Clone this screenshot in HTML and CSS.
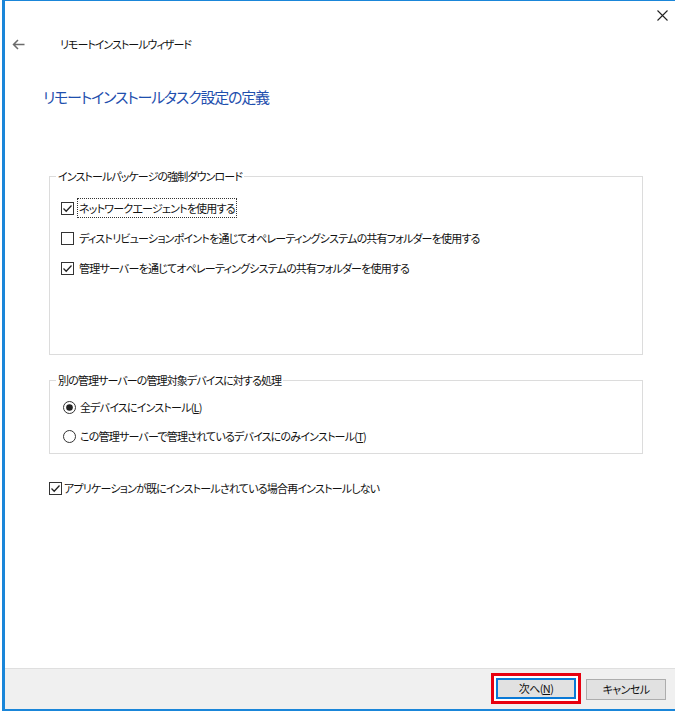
FILE: index.html
```html
<!DOCTYPE html>
<html lang="ja">
<head>
<meta charset="utf-8">
<title>リモートインストールウィザード</title>
<link rel="stylesheet" href="styles.css">
</head>
<body>
<div class="window">
  <div class="caption">
    <button class="close" aria-label="閉じる">
      <svg width="11" height="11" viewBox="0 0 11 11"><path d="M0.5 0.5 L10.5 10.5 M10.5 0.5 L0.5 10.5" stroke="#222" stroke-width="1.1" fill="none"/></svg>
    </button>
  </div>
  <div class="nav">
    <svg class="back" width="13" height="11" viewBox="0 0 13 11"><path d="M12.5 5.5 H1.5 M6 1 L1.5 5.5 L6 10" stroke="#6b6b6b" stroke-width="1.5" fill="none"/></svg>
    <span class="nav-title">リモートインストールウィザード</span>
  </div>
  <h1 class="heading">リモートインストールタスク設定の定義</h1>
  <main class="content">
    <fieldset class="group group-download">
      <legend class="group-title">インストールパッケージの強制ダウンロード</legend>
      <div class="options options-download">
        <label class="option">
          <span class="check"><svg width="13" height="13" viewBox="0 0 13 13"><rect x="0.5" y="0.5" width="12" height="12" fill="#fff" stroke="#333"/><path d="M2.5 6.5 L5.2 9.2 L10.5 3.5" stroke="#222" stroke-width="1.3" fill="none"/></svg></span>
          <span class="label focus">ネットワークエージェントを使用する</span>
        </label>
        <label class="option">
          <span class="check"><svg width="13" height="13" viewBox="0 0 13 13"><rect x="0.5" y="0.5" width="12" height="12" fill="#fff" stroke="#333"/></svg></span>
          <span class="label">ディストリビューションポイントを通じてオペレーティングシステムの共有フォルダーを使用する</span>
        </label>
        <label class="option">
          <span class="check"><svg width="13" height="13" viewBox="0 0 13 13"><rect x="0.5" y="0.5" width="12" height="12" fill="#fff" stroke="#333"/><path d="M2.5 6.5 L5.2 9.2 L10.5 3.5" stroke="#222" stroke-width="1.3" fill="none"/></svg></span>
          <span class="label">管理サーバーを通じてオペレーティングシステムの共有フォルダーを使用する</span>
        </label>
      </div>
    </fieldset>

    <fieldset class="group group-other">
      <legend class="group-title">別の管理サーバーの管理対象デバイスに対する処理</legend>
      <div class="options options-other">
        <label class="option">
          <span class="radio"><svg width="13" height="13" viewBox="0 0 13 13"><circle cx="6.5" cy="6.5" r="6" fill="#fff" stroke="#333"/><circle cx="6.5" cy="6.5" r="3.3" fill="#222"/></svg></span>
          <span class="label">全デバイスにインストール(<u>L</u>)</span>
        </label>
        <label class="option">
          <span class="radio"><svg width="13" height="13" viewBox="0 0 13 13"><circle cx="6.5" cy="6.5" r="6" fill="#fff" stroke="#333"/></svg></span>
          <span class="label">この管理サーバーで管理されているデバイスにのみインストール(<u>T</u>)</span>
        </label>
      </div>
    </fieldset>

    <label class="option option-standalone">
      <span class="check"><svg width="13" height="13" viewBox="0 0 13 13"><rect x="0.5" y="0.5" width="12" height="12" fill="#fff" stroke="#333"/><path d="M2.5 6.5 L5.2 9.2 L10.5 3.5" stroke="#222" stroke-width="1.3" fill="none"/></svg></span>
      <span class="label">アプリケーションが既にインストールされている場合再インストールしない</span>
    </label>
  </main>
  <footer class="footer">
    <div class="highlight">
      <button class="btn btn-default">次へ(<u>N</u>)</button>
    </div>
    <button class="btn">キャンセル</button>
  </footer>
</div>
</body>
</html>
```

FILE: styles.css
```css
* {
  box-sizing: border-box;
}

html, body {
  margin: 0;
  padding: 0;
  background: #fff;
}

body {
  font-family: "Noto Sans CJK JP", "Noto Sans", sans-serif;
  font-size: 11px;
  letter-spacing: -0.8px;
  color: #111;
  font-feature-settings: "palt";
}

.window {
  margin-left: 2px;
  height: 711px;
  border-top: 1px solid #1a86d9;
  border-left: 3px solid #1a86d9;
  border-bottom: 2px solid #1a86d9;
  display: flex;
  flex-direction: column;
  background: #fff;
}

.caption {
  height: 28px;
  display: flex;
  justify-content: flex-end;
  align-items: flex-start;
}

.close {
  border: 0;
  background: transparent;
  padding: 0;
  margin: 9px 7px 0 0;
  width: 11px;
  height: 11px;
  display: flex;
}

.nav {
  margin-top: 5px;
  height: 20px;
  display: flex;
  align-items: center;
  padding-left: 7px;
}

.back {
  display: block;
}

.nav-title {
  margin-left: 35px;
  font-size: 11px;
  letter-spacing: -1px;
  line-height: 20px;
}

.heading {
  margin: 32px 0 0 0;
  padding-left: 38px;
  font-size: 15px;
  letter-spacing: -1.2px;
  line-height: 22px;
  font-weight: normal;
  color: #1f4fae;
}

.content {
  flex: 1;
  padding: 60px 32px 0 44px;
}

.group {
  margin: 0;
  border: 1px solid #dcdcdc;
  padding: 0;
}

.group-title {
  margin-left: 6px;
  padding: 0 2px;
  font-size: 11px;
  letter-spacing: -0.9px;
  line-height: 16px;
}

.options {
  display: flex;
  flex-direction: column;
}

.options-download {
  gap: 12px;
  padding: 15px 0 77px 11px;
}

.group-other {
  margin-top: 17px;
}

.options-other {
  gap: 11px;
  padding: 10px 0 8px 13px;
}

.option {
  display: flex;
  align-items: center;
  height: 18px;
  line-height: 18px;
}

.check, .radio {
  width: 13px;
  height: 13px;
  display: flex;
  flex: none;
}

.label {
  margin-left: 5px;
  white-space: nowrap;
}

.options-other .label {
  margin-left: 4px;
}

.focus {
  outline: 1px dotted #333;
  outline-offset: 0;
  margin-left: 4px;
  padding: 0 1px;
}

.option-standalone {
  margin-top: 25px;
}

.option-standalone .label {
  margin-left: 2px;
}

.footer {
  height: 41px;
  background: #f0f0f0;
  border-top: 1px solid #dfdfdf;
  display: flex;
  align-items: flex-start;
  justify-content: flex-end;
  padding: 4px 9px 0 0;
  gap: 5px;
}

.highlight {
  border: 3px solid #e8000f;
  padding: 2px;
  background: #fff;
}

.btn {
  font-family: inherit;
  font-feature-settings: "palt";
  font-size: 11px;
  letter-spacing: -0.6px;
  color: #111;
  width: 80px;
  height: 21px;
  padding: 0;
  line-height: 19px;
  background: #e1e1e1;
  border: 1px solid #adadad;
}

.footer > .btn {
  margin-top: 6px;
}

.btn-default {
  border: 2px solid #0a79d6;
  line-height: 17px;
  display: block;
}
```
